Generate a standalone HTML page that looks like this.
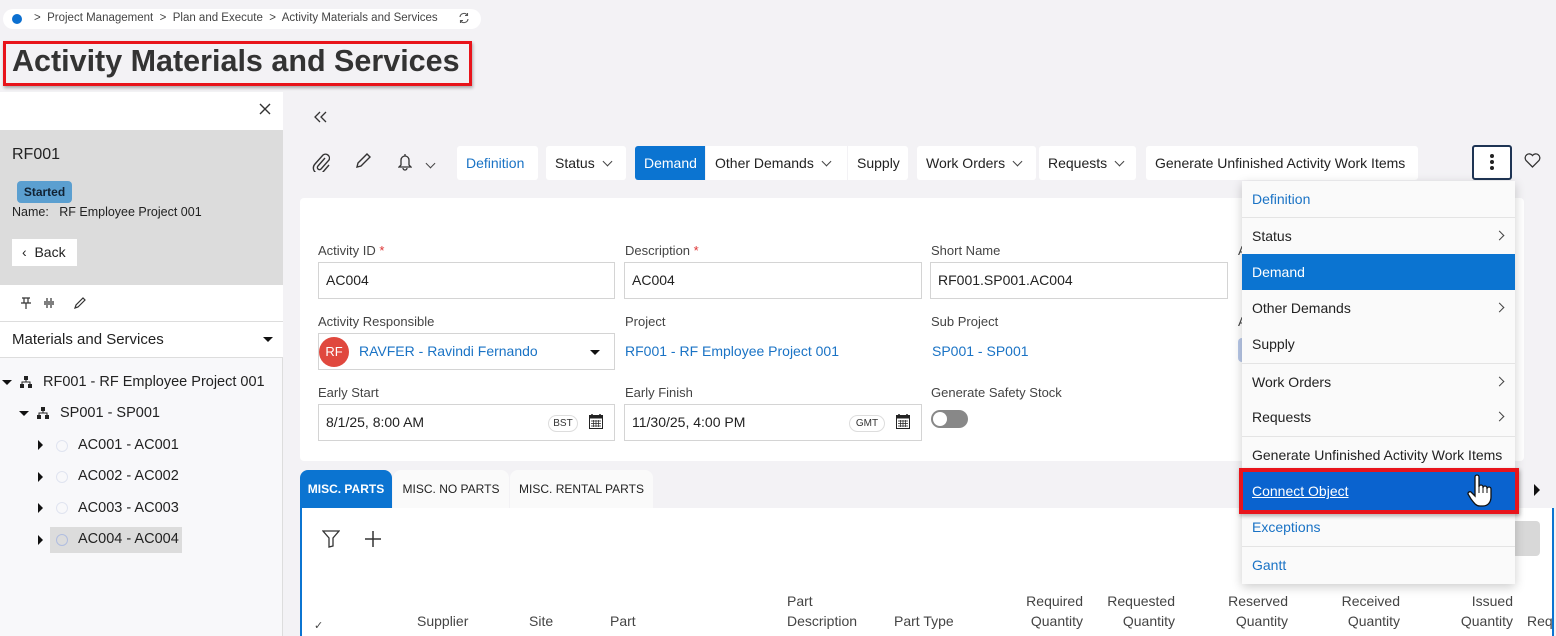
<!DOCTYPE html>
<html><head><meta charset="utf-8"><style>
*{box-sizing:border-box;margin:0;padding:0}
body{width:1556px;height:636px;overflow:hidden;background:#f3f2f5;font-family:"Liberation Sans",sans-serif;color:#333;position:relative;font-size:14px}
.a{position:absolute}
.btn{position:absolute;top:146px;height:34px;background:#fff;border-radius:3px;line-height:34px;font-size:14px;padding:0 9px;color:#222;white-space:nowrap}
.chev{display:inline-block;width:7px;height:7px;border-right:1.3px solid #444;border-bottom:1.3px solid #444;transform:rotate(45deg);margin-left:9px;position:relative;top:-3px}
.lbl{position:absolute;font-size:13px;color:#444}
.inp{position:absolute;height:37px;border:1px solid #d4d4d4;background:#fff;line-height:35px;padding-left:7px;font-size:14px;color:#222}
.mi{position:absolute;left:0;width:273px;height:36px;line-height:36px;padding-left:10px;font-size:14px;color:#222;border-top:1px solid #e4e4e4}
.mi .r{position:absolute;right:12px;top:14px;width:7px;height:7px;border-right:1.3px solid #444;border-top:1.3px solid #444;transform:rotate(45deg)}
.tr{position:absolute;font-size:14px;color:#222}
.tri{position:absolute;width:0;height:0;border-left:5px solid #111;border-top:5px solid transparent;border-bottom:5px solid transparent}
.trd{position:absolute;width:0;height:0;border-top:5px solid #111;border-left:5px solid transparent;border-right:5px solid transparent}
.th{position:absolute;font-size:14px;color:#444;line-height:20px}
</style></head><body>
<!-- breadcrumb -->
<div class="a" style="left:3px;top:9px;width:478px;height:20px;background:#fff;border-radius:10px"></div>
<div class="a" style="left:12px;top:14px;width:10px;height:10px;border-radius:50%;background:#0b6fd0"></div>
<div class="a" style="left:34px;top:12px;font-size:11.5px;color:#444;white-space:nowrap">&gt;&nbsp; Project Management &nbsp;&gt;&nbsp; Plan and Execute &nbsp;&gt;&nbsp; Activity Materials and Services</div>
<svg class="a" style="left:458px;top:12px" width="12" height="12" viewBox="0 0 12 12" fill="none" stroke="#555" stroke-width="1.1"><path d="M2 5a4 4 0 0 1 7.5-1.5M10 7a4 4 0 0 1-7.5 1.5M9.5 1v2.5H7M2.5 11V8.5H5"/></svg>
<!-- title -->
<div class="a" style="left:3px;top:41px;width:469px;height:45px;border:3px solid #e8141b;box-shadow:1px 2px 3px rgba(0,0,0,.3)"></div>
<div class="a" style="left:12px;top:44px;font-size:30.5px;font-weight:bold;color:#333;white-space:nowrap">Activity Materials and Services</div>
<!-- left panel -->
<div class="a" style="left:0;top:92px;width:283px;height:544px;background:#f8f8fa;border-right:1px solid #ddd"></div>
<div class="a" style="left:0;top:92px;width:283px;height:38px;background:#fff"></div>
<svg class="a" style="left:259px;top:103px" width="12" height="12" viewBox="0 0 12 12" stroke="#333" stroke-width="1.4"><path d="M1 1L11 11M11 1L1 11"/></svg>
<div class="a" style="left:0;top:130px;width:283px;height:155px;background:#dcdcdc"></div>
<div class="a" style="left:12px;top:146px;font-size:16px;color:#222">RF001</div>
<div class="a" style="left:17px;top:181px;width:55px;height:22px;background:#5b9fd0;border-radius:4px;font-size:12px;font-weight:bold;color:#123;line-height:22px;text-align:center">Started</div>
<div class="a" style="left:12px;top:205px;font-size:12.5px;color:#222">Name:&nbsp;&nbsp; RF Employee Project 001</div>
<div class="a" style="left:12px;top:239px;width:65px;height:27px;background:#fff;font-size:14px;line-height:27px;padding-left:10px;color:#222">‹&nbsp; Back</div>
<div class="a" style="left:0;top:285px;width:283px;height:73px;background:#fff;border-bottom:1px solid #ddd"></div>
<div class="a" style="left:0;top:321px;width:283px;height:1px;background:#ddd"></div>
<svg class="a" style="left:20px;top:296px" width="70" height="14" viewBox="0 0 70 14" fill="none" stroke="#333" stroke-width="1.2"><path d="M2 2h8M4 2v5M8 2v5M1 7h10M6 7v6"/><path d="M27 2v3M27 9v3M31 2v3M31 9v3M24 6h10M24 8h10"/><path d="M55 12l1-3 7-7 2 2-7 7z"/></svg>
<div class="a" style="left:12px;top:331px;font-size:15px;color:#222">Materials and Services</div>
<div class="trd" style="left:263px;top:337px"></div>
<svg width="0" height="0" style="position:absolute"><defs><g id="org"><rect x="4" y="0" width="4" height="4" fill="#222"/><rect x="0" y="8" width="4" height="4" fill="#222"/><rect x="8" y="8" width="4" height="4" fill="#222"/><path d="M6 4v2M2 8V6h8v2" stroke="#222" fill="none"/></g></defs></svg>
<div class="trd" style="left:2px;top:380px"></div><svg class="a" style="left:20px;top:376px" width="12" height="12"><use href="#org"/></svg><div class="tr" style="left:43px;top:374px;font-size:14.5px">RF001 - RF Employee Project 001</div>
<div class="trd" style="left:19px;top:411px"></div><svg class="a" style="left:37px;top:407px" width="12" height="12"><use href="#org"/></svg><div class="tr" style="left:60px;top:405px;font-size:14.5px">SP001 - SP001</div>
<div class="a" style="left:50px;top:527px;width:132px;height:26px;background:#dcdcdc"></div>
<div class="tri" style="left:38px;top:440px"></div><div class="a" style="left:56px;top:440px;width:12px;height:12px;border:1px solid #e0e4f0;border-radius:50%"></div><div class="tr" style="left:78px;top:437px;font-size:14.5px">AC001 - AC001</div>
<div class="tri" style="left:38px;top:472px"></div><div class="a" style="left:56px;top:471px;width:12px;height:12px;border:1px solid #e0e4f0;border-radius:50%"></div><div class="tr" style="left:78px;top:468px;font-size:14.5px">AC002 - AC002</div>
<div class="tri" style="left:38px;top:503px"></div><div class="a" style="left:56px;top:502px;width:12px;height:12px;border:1px solid #e0e4f0;border-radius:50%"></div><div class="tr" style="left:78px;top:500px;font-size:14.5px">AC003 - AC003</div>
<div class="tri" style="left:38px;top:535px"></div><div class="a" style="left:56px;top:534px;width:12px;height:12px;border:1px solid #b0bde0;border-radius:50%"></div><div class="tr" style="left:78px;top:531px;font-size:14.5px">AC004 - AC004</div>
<!-- toolbar -->
<svg class="a" style="left:314px;top:111px" width="14" height="12" viewBox="0 0 14 12" fill="none" stroke="#333" stroke-width="1.3"><path d="M6 1L1 6l5 5M12 1L7 6l5 5"/></svg>
<svg class="a" style="left:312px;top:152px" width="18" height="20" viewBox="0 0 18 20" fill="none" stroke="#333" stroke-width="1.4"><path d="M13 6l-7 8a2 2 0 0 0 3 3l8-9a4 4 0 0 0-6-5l-8 9a5.5 5.5 0 0 0 8 8l6-7"/></svg>
<svg class="a" style="left:355px;top:153px" width="16" height="16" viewBox="0 0 16 16" fill="none" stroke="#333" stroke-width="1.4"><path d="M2 14l1-4 9-9 3 3-9 9z"/></svg>
<svg class="a" style="left:398px;top:153px" width="14" height="18" viewBox="0 0 14 18" fill="none" stroke="#333" stroke-width="1.3"><path d="M7 1v1.5M3 12V7a4 4 0 0 1 8 0v5l2 2H1zM5 15a2 2 0 0 0 4 0"/></svg><div class="chev" style="position:absolute;left:418px;top:160px"></div>
<div class="btn" style="left:457px;width:81px;color:#1a73c5">Definition</div>
<div class="btn" style="left:546px;width:80px">Status<span class="chev"></span></div>
<div class="btn" style="left:635px;width:70px;background:#0b74d1;color:#fff;border-radius:3px 0 0 3px">Demand</div>
<div class="btn" style="left:706px;width:141px;border-radius:0">Other Demands<span class="chev"></span></div>
<div class="btn" style="left:848px;width:60px;border-radius:0 3px 3px 0">Supply</div>
<div class="btn" style="left:917px;width:119px">Work Orders<span class="chev"></span></div>
<div class="btn" style="left:1039px;width:97px">Requests<span class="chev"></span></div>
<div class="btn" style="left:1146px;width:272px">Generate Unfinished Activity Work Items</div>
<div class="a" style="left:1472px;top:145px;width:40px;height:35px;border:2px solid #1e3454;border-radius:3px;background:#fff"></div>
<div class="a" style="left:1490px;top:154px;width:4px;height:4px;border-radius:50%;background:#222;box-shadow:0 6px 0 #222,0 12px 0 #222"></div>
<svg class="a" style="left:1524px;top:153px" width="17" height="15" viewBox="0 0 17 15" fill="none" stroke="#333" stroke-width="1.3"><path d="M8.5 14L2 7.5A3.5 3.5 0 0 1 8.5 2.5 3.5 3.5 0 0 1 15 7.5z"/></svg>
<!-- form card -->
<div class="a" style="left:300px;top:198px;width:1224px;height:263px;background:#fff;border-radius:4px"></div>
<div class="lbl" style="left:318px;top:243px">Activity ID <span style="color:#d33">*</span></div>
<div class="lbl" style="left:625px;top:243px">Description <span style="color:#d33">*</span></div>
<div class="lbl" style="left:931px;top:243px">Short Name</div>
<div class="lbl" style="left:1238px;top:243px">A</div>
<div class="inp" style="left:318px;top:262px;width:297px">AC004</div>
<div class="inp" style="left:624px;top:262px;width:298px">AC004</div>
<div class="inp" style="left:930px;top:262px;width:298px">RF001.SP001.AC004</div>
<div class="lbl" style="left:318px;top:314px">Activity Responsible</div>
<div class="lbl" style="left:625px;top:314px">Project</div>
<div class="lbl" style="left:931px;top:314px">Sub Project</div>
<div class="lbl" style="left:1238px;top:314px">A</div>
<div class="inp" style="left:318px;top:333px;width:297px"></div>
<div class="a" style="left:319px;top:337px;width:30px;height:30px;border-radius:50%;background:#e0483e;color:#fff;font-size:13px;line-height:30px;text-align:center">RF</div>
<div class="a" style="left:359px;top:343px;font-size:14px;color:#1a73c5">RAVFER - Ravindi Fernando</div>
<div class="trd" style="left:590px;top:350px"></div>
<div class="a" style="left:625px;top:343px;font-size:14px;color:#1a73c5">RF001 - RF Employee Project 001</div>
<div class="a" style="left:932px;top:343px;font-size:14px;color:#1a73c5">SP001 - SP001</div>
<div class="a" style="left:1238px;top:338px;width:6px;height:24px;background:#b8c8e8;border-radius:4px 0 0 4px"></div>
<div class="lbl" style="left:318px;top:385px">Early Start</div>
<div class="lbl" style="left:625px;top:385px">Early Finish</div>
<div class="lbl" style="left:931px;top:385px">Generate Safety Stock</div>
<div class="inp" style="left:318px;top:404px;width:297px">8/1/25, 8:00 AM</div>
<div class="a" style="left:548px;top:415px;width:30px;height:17px;border:1px solid #ddd;border-radius:9px;font-size:10px;text-align:center;line-height:15px">BST</div>
<svg class="a" style="left:589px;top:414px" width="14" height="15" viewBox="0 0 14 15"><rect x="0.5" y="1.5" width="13" height="13" fill="none" stroke="#222"/><rect x="0.5" y="1.5" width="13" height="3" fill="#222"/><path d="M3 0v3M11 0v3" stroke="#222" stroke-width="1.5"/><path d="M2 7h10M2 9.5h10M2 12h10M4.5 6v7M7 6v7M9.5 6v7" stroke="#222" stroke-width=".7"/></svg>
<div class="inp" style="left:624px;top:404px;width:298px">11/30/25, 4:00 PM</div>
<div class="a" style="left:849px;top:415px;width:36px;height:17px;border:1px solid #ddd;border-radius:9px;font-size:10px;text-align:center;line-height:15px">GMT</div>
<svg class="a" style="left:896px;top:414px" width="14" height="15" viewBox="0 0 14 15"><rect x="0.5" y="1.5" width="13" height="13" fill="none" stroke="#222"/><rect x="0.5" y="1.5" width="13" height="3" fill="#222"/><path d="M3 0v3M11 0v3" stroke="#222" stroke-width="1.5"/><path d="M2 7h10M2 9.5h10M2 12h10M4.5 6v7M7 6v7M9.5 6v7" stroke="#222" stroke-width=".7"/></svg>
<div class="a" style="left:931px;top:410px;width:37px;height:18px;border-radius:9px;background:#888"></div>
<div class="a" style="left:933px;top:412px;width:14px;height:14px;border-radius:50%;background:#fff"></div>
<!-- tabs -->
<div class="a" style="left:300px;top:470px;width:92px;height:38px;background:#0b74d1;border-radius:8px 8px 0 0;color:#fff;font-size:12px;font-weight:bold;line-height:38px;text-align:center">MISC. PARTS</div>
<div class="a" style="left:393px;top:470px;width:116px;height:38px;background:#fafafa;border-radius:8px 8px 0 0;color:#222;font-size:12px;line-height:38px;text-align:center">MISC. NO PARTS</div>
<div class="a" style="left:510px;top:470px;width:143px;height:38px;background:#fafafa;border-radius:8px 8px 0 0;color:#222;font-size:12px;line-height:38px;text-align:center">MISC. RENTAL PARTS</div>
<div class="a" style="left:1534px;top:484px;border-left:6px solid #111;border-top:6px solid transparent;border-bottom:6px solid transparent"></div>
<div class="a" style="left:300px;top:508px;width:1254px;height:128px;background:#fff;border-left:2px solid #0b74d1;border-right:2px solid #0b74d1"></div>
<svg class="a" style="left:322px;top:530px" width="18" height="18" viewBox="0 0 18 18" fill="none" stroke="#333" stroke-width="1.3"><path d="M1 1h16l-6 7v8l-4 1V8z"/></svg>
<svg class="a" style="left:365px;top:531px" width="16" height="16" stroke="#333" stroke-width="1.5"><path d="M8 0v16M0 8h16"/></svg>
<div class="a" style="left:1500px;top:521px;width:40px;height:35px;background:#d8d8d8;border-radius:4px"></div>
<div class="th" style="left:314px;top:616px;font-size:11px">✓</div>
<div class="th" style="left:417px;top:611px">Supplier</div>
<div class="th" style="left:529px;top:611px">Site</div>
<div class="th" style="left:610px;top:611px">Part</div>
<div class="th" style="left:787px;top:591px">Part<br>Description</div>
<div class="th" style="left:894px;top:611px">Part Type</div>
<div class="th" style="left:1010px;top:591px;text-align:right;width:73px">Required<br>Quantity</div>
<div class="th" style="left:1100px;top:591px;text-align:right;width:75px">Requested<br>Quantity</div>
<div class="th" style="left:1208px;top:591px;text-align:right;width:80px">Reserved<br>Quantity</div>
<div class="th" style="left:1320px;top:591px;text-align:right;width:80px">Received<br>Quantity</div>
<div class="th" style="left:1433px;top:591px;text-align:right;width:80px">Issued<br>Quantity</div>
<div class="th" style="left:1527px;top:611px">Req</div>
<!-- dropdown menu -->
<div class="a" style="left:1242px;top:181px;width:273px;height:403px;background:#fafafa;box-shadow:0 3px 10px rgba(0,0,0,.2)">
<div class="mi" style="top:0;border-top:none;color:#1a73c5">Definition</div>
<div class="mi" style="top:36px">Status<span class="r"></span></div>
<div class="mi" style="top:73px;background:#0b74d1;color:#fff;border-top:none">Demand</div>
<div class="mi" style="top:109px;border-top:none">Other Demands<span class="r"></span></div>
<div class="mi" style="top:145px;border-top:none">Supply</div>
<div class="mi" style="top:182px">Work Orders<span class="r"></span></div>
<div class="mi" style="top:218px;border-top:none">Requests<span class="r"></span></div>
<div class="mi" style="top:255px">Generate Unfinished Activity Work Items</div>
<div class="mi" style="top:328px;border-top:none;color:#1a73c5">Exceptions</div>
<div class="mi" style="top:365px;color:#1a73c5">Gantt</div>
</div>
<div class="a" style="left:1239px;top:468px;width:280px;height:46px;border:4px solid #e8141b;background:#0a63cf;box-shadow:1px 2px 4px rgba(0,0,0,.3)"></div>
<div class="a" style="left:1252px;top:483px;font-size:14px;color:#fff;text-decoration:underline">Connect Object</div>
<svg class="a" style="left:1467px;top:474px" width="26" height="34" viewBox="0 0 26 34"><path d="M8 3a2 2 0 0 1 4 0v10a2 2 0 0 1 4 0v1a2 2 0 0 1 4 0v1a2 2 0 0 1 4 0v8c0 5-3 9-8 9h-3c-4 0-6-3-9-7l-3-5a2 2 0 0 1 3-2l4 4z" fill="#fff" stroke="#111" stroke-width="1.3"/><path d="M12 13v6M16 14v5M20 15v4" stroke="#111" stroke-width="1"/></svg>
</body></html>
